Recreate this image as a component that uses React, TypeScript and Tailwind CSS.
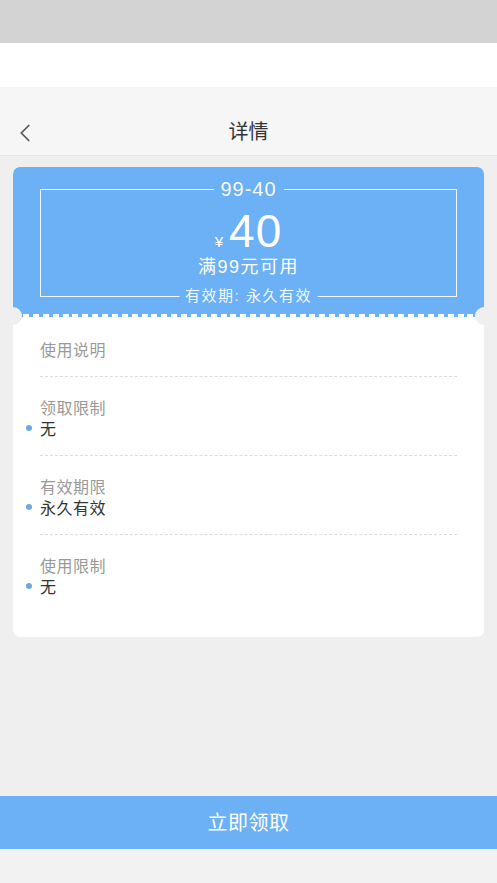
import { ChevronLeft } from 'lucide-react';

const font = { fontFamily: '"Liberation Sans", "Noto Sans CJK SC", sans-serif' };

const rules = [
  { label: '领取限制', value: '无' },
  { label: '有效期限', value: '永久有效' },
  { label: '使用限制', value: '无' }
];

export default function App() {
  return (
    <div className="flex h-[883px] w-full flex-col bg-[#efefef]" style={font}>
      {/* status bar + spacer */}
      <div className="h-[43px] bg-[#d3d3d3]" />
      <div className="h-[44px] bg-white" />

      {/* nav */}
      <div className="relative flex h-[69px] items-center justify-center border-b border-[#e6e6e6] bg-[#f6f6f6] pt-[22px]">
        <button className="absolute left-[10px] top-[31px] text-[#555]">
          <ChevronLeft className="h-[30px] w-[30px]" strokeWidth={1.4} />
        </button>
        <span className="text-[20px] text-[#333]">详情</span>
      </div>

      {/* coupon card */}
      <div className="mx-[13px] mt-[11px] rounded-[7px] bg-white">
        <div className="relative rounded-t-[7px] bg-[#6cb0f5] px-[27px] pb-[20px] pt-[22px]">
          <div className="relative flex h-[108px] flex-col items-center border border-white/90">
            <span className="absolute -top-[13px] left-1/2 -translate-x-1/2 bg-[#6cb0f5] px-[7px] text-[20px] leading-[24px] tracking-[1px] text-white/95">
              99-40
            </span>
            <div className="mt-[21px] flex items-baseline text-white">
              <span className="mr-[6px] text-[15px]">¥</span>
              <span className="text-[46px] leading-[40px] tracking-[1px]">40</span>
            </div>
            <span className="mt-[1px] text-[18px] leading-[24px] tracking-[1.5px] text-white">满99元可用</span>
            <span className="absolute -bottom-[11px] left-1/2 -translate-x-1/2 whitespace-nowrap bg-[#6cb0f5] px-[6px] text-[15px] leading-[22px] tracking-[1.5px] text-white/95">
              有效期: 永久有效
            </span>
          </div>
          <div className="absolute bottom-0 left-[10px] right-[10px] flex justify-between">
            {Array.from({ length: 46 }).map((_, i) => (
              <span key={i} className="h-[3px] w-[6px] bg-white" />
            ))}
          </div>
          <span className="absolute -bottom-[8px] -left-[9px] h-[18px] w-[18px] rounded-full bg-[#efefef]" />
          <span className="absolute -bottom-[8px] -right-[9px] h-[18px] w-[18px] rounded-full bg-[#efefef]" />
        </div>

        <div className="px-[27px] text-[16px] leading-[21px] tracking-[0.5px]">
          <div className="border-b border-dashed border-[#dcdcdc] pb-[15px] pt-[23px] text-[#999]">
            使用说明
          </div>
          {rules.map((r, i) => (
            <div
              key={r.label}
              className={
                i < rules.length - 1
                  ? 'border-b border-dashed border-[#dcdcdc] pb-[15px] pt-[21px]'
                  : 'pb-[39px] pt-[21px]'
              }
            >
              <div className="text-[#999]">{r.label}</div>
              <div className="-ml-[14px] flex items-center text-[#333]">
                <span className="mr-[8px] -mt-[4px] h-[6px] w-[6px] rounded-full bg-[#6aa8e6]" />
                {r.value}
              </div>
            </div>
          ))}
        </div>
      </div>

      <div className="flex-1" />

      <button className="flex h-[53px] items-center justify-center bg-[#6cb1f6] text-[20px] tracking-[0.5px] text-white">
        立即领取
      </button>
      <div className="h-[34px] bg-[#f2f2f2]" />
    </div>
  );
}
